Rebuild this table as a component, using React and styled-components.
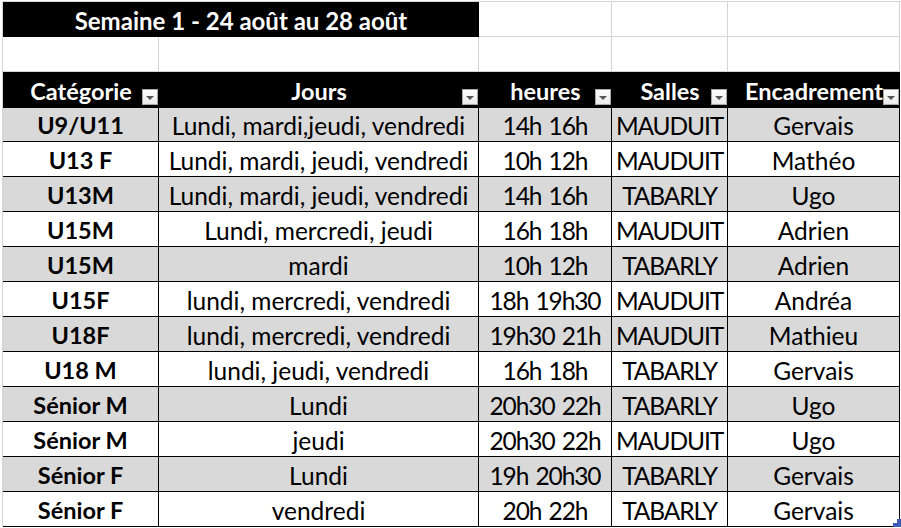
import React from 'react';
import styled, { createGlobalStyle } from 'styled-components';

const GlobalStyle = createGlobalStyle`
  html, body {
    margin: 0;
    padding: 0;
    background: #ffffff;
  }
  body {
    font-family: Lato, "Liberation Sans", sans-serif;
  }
`;

const Sheet = styled.div`
  position: relative;
  display: grid;
  grid-template-columns: 156px 320px 133px 116px 172px;
  grid-auto-rows: 35px;
  margin: 1px 0 0 2px;
  width: 898px;
  border-top: 1px solid #d4d4d4;
  border-left: 1px solid #d4d4d4;
`;

const TitleCell = styled.div`
  grid-column: span 2;
  background: #000;
  color: #fff;
  font-weight: 700;
  font-size: 24px;
  display: flex;
  align-items: center;
  justify-content: center;
  padding-top: 1px;
`;

const BlankCell = styled.div`
  box-sizing: border-box;
  border-right: 1px solid #d4d4d4;
  border-bottom: 1px solid #d4d4d4;
`;

const HeaderCell = styled.div`
  position: relative;
  height: 36px;
  background: #000;
  color: #fff;
  font-weight: 700;
  font-size: 23.5px;
  display: flex;
  align-items: center;
  justify-content: center;
  padding-top: 1px;
  box-sizing: border-box;
  white-space: nowrap;
`;

const FilterButton = styled.span`
  position: absolute;
  right: 1px;
  bottom: 3px;
  width: 16px;
  height: 16px;
  box-sizing: border-box;
  border: 1px solid #a9a9a9;
  background: linear-gradient(#fdfdfd, #e9e9e9);
  display: flex;
  align-items: center;
  justify-content: center;

  &::after {
    content: '';
    border-left: 4px solid transparent;
    border-right: 4px solid transparent;
    border-top: 4px solid #555;
    margin-top: 1px;
  }
`;

const DataCell = styled.div`
  box-sizing: border-box;
  border-right: 1px solid #000;
  border-bottom: 1px solid #000;
  background: ${({ $shade }) => ($shade ? '#d9d9d9' : '#ffffff')};
  color: #000;
  font-size: ${({ $bold }) => ($bold ? '23.5px' : '24.5px')};
  font-weight: ${({ $bold }) => ($bold ? 700 : 400)};
  letter-spacing: ${({ $tight }) => ($tight ? '-1.1px' : 'normal')};
  word-spacing: ${({ $tight }) => ($tight ? '2px' : 'normal')};
  display: flex;
  align-items: center;
  justify-content: center;
  white-space: nowrap;
  overflow: hidden;
  padding-top: 2px;
`;

const ResizeHandle = styled.svg`
  position: absolute;
  right: 0;
  bottom: 0;
  width: 8px;
  height: 8px;
`;

const headers = ['Catégorie', 'Jours', 'heures', 'Salles', 'Encadrement'];

const rows = [
  ['U9/U11', 'Lundi, mardi,jeudi, vendredi', '14h 16h', 'MAUDUIT', 'Gervais'],
  ['U13 F', 'Lundi, mardi, jeudi, vendredi', '10h 12h', 'MAUDUIT', 'Mathéo'],
  ['U13M', 'Lundi, mardi, jeudi, vendredi', '14h 16h', 'TABARLY', 'Ugo'],
  ['U15M', 'Lundi, mercredi, jeudi', '16h 18h', 'MAUDUIT', 'Adrien'],
  ['U15M', 'mardi', '10h 12h', 'TABARLY', 'Adrien'],
  ['U15F', 'lundi, mercredi, vendredi', '18h 19h30', 'MAUDUIT', 'Andréa'],
  ['U18F', 'lundi, mercredi, vendredi', '19h30 21h', 'MAUDUIT', 'Mathieu'],
  ['U18 M', 'lundi, jeudi, vendredi', '16h 18h', 'TABARLY', 'Gervais'],
  ['Sénior M', 'Lundi', '20h30 22h', 'TABARLY', 'Ugo'],
  ['Sénior M', 'jeudi', '20h30 22h', 'MAUDUIT', 'Ugo'],
  ['Sénior F', 'Lundi', '19h 20h30', 'TABARLY', 'Gervais'],
  ['Sénior F', 'vendredi', '20h 22h', 'TABARLY', 'Gervais'],
];

export default function App() {
  return (
    <>
      <GlobalStyle />
      <Sheet>
        <TitleCell>Semaine 1 - 24 août au 28 août</TitleCell>
        <BlankCell />
        <BlankCell />
        <BlankCell />
        {[0, 1, 2, 3, 4].map((i) => (
          <BlankCell key={`b${i}`} />
        ))}
        {headers.map((h) => (
          <HeaderCell key={h}>
            {h}
            <FilterButton />
          </HeaderCell>
        ))}
        {rows.map((row, r) =>
          row.map((value, c) => (
            <DataCell
              key={`${r}-${c}`}
              $shade={r % 2 === 0}
              $bold={c === 0}
              $tight={c === 2 || c === 3}
            >
              {value}
            </DataCell>
          ))
        )}
        <ResizeHandle viewBox="0 0 8 8">
          <path d="M4 0H8V8H0V4H4Z" fill="#3f5bb5" />
        </ResizeHandle>
      </Sheet>
    </>
  );
}
